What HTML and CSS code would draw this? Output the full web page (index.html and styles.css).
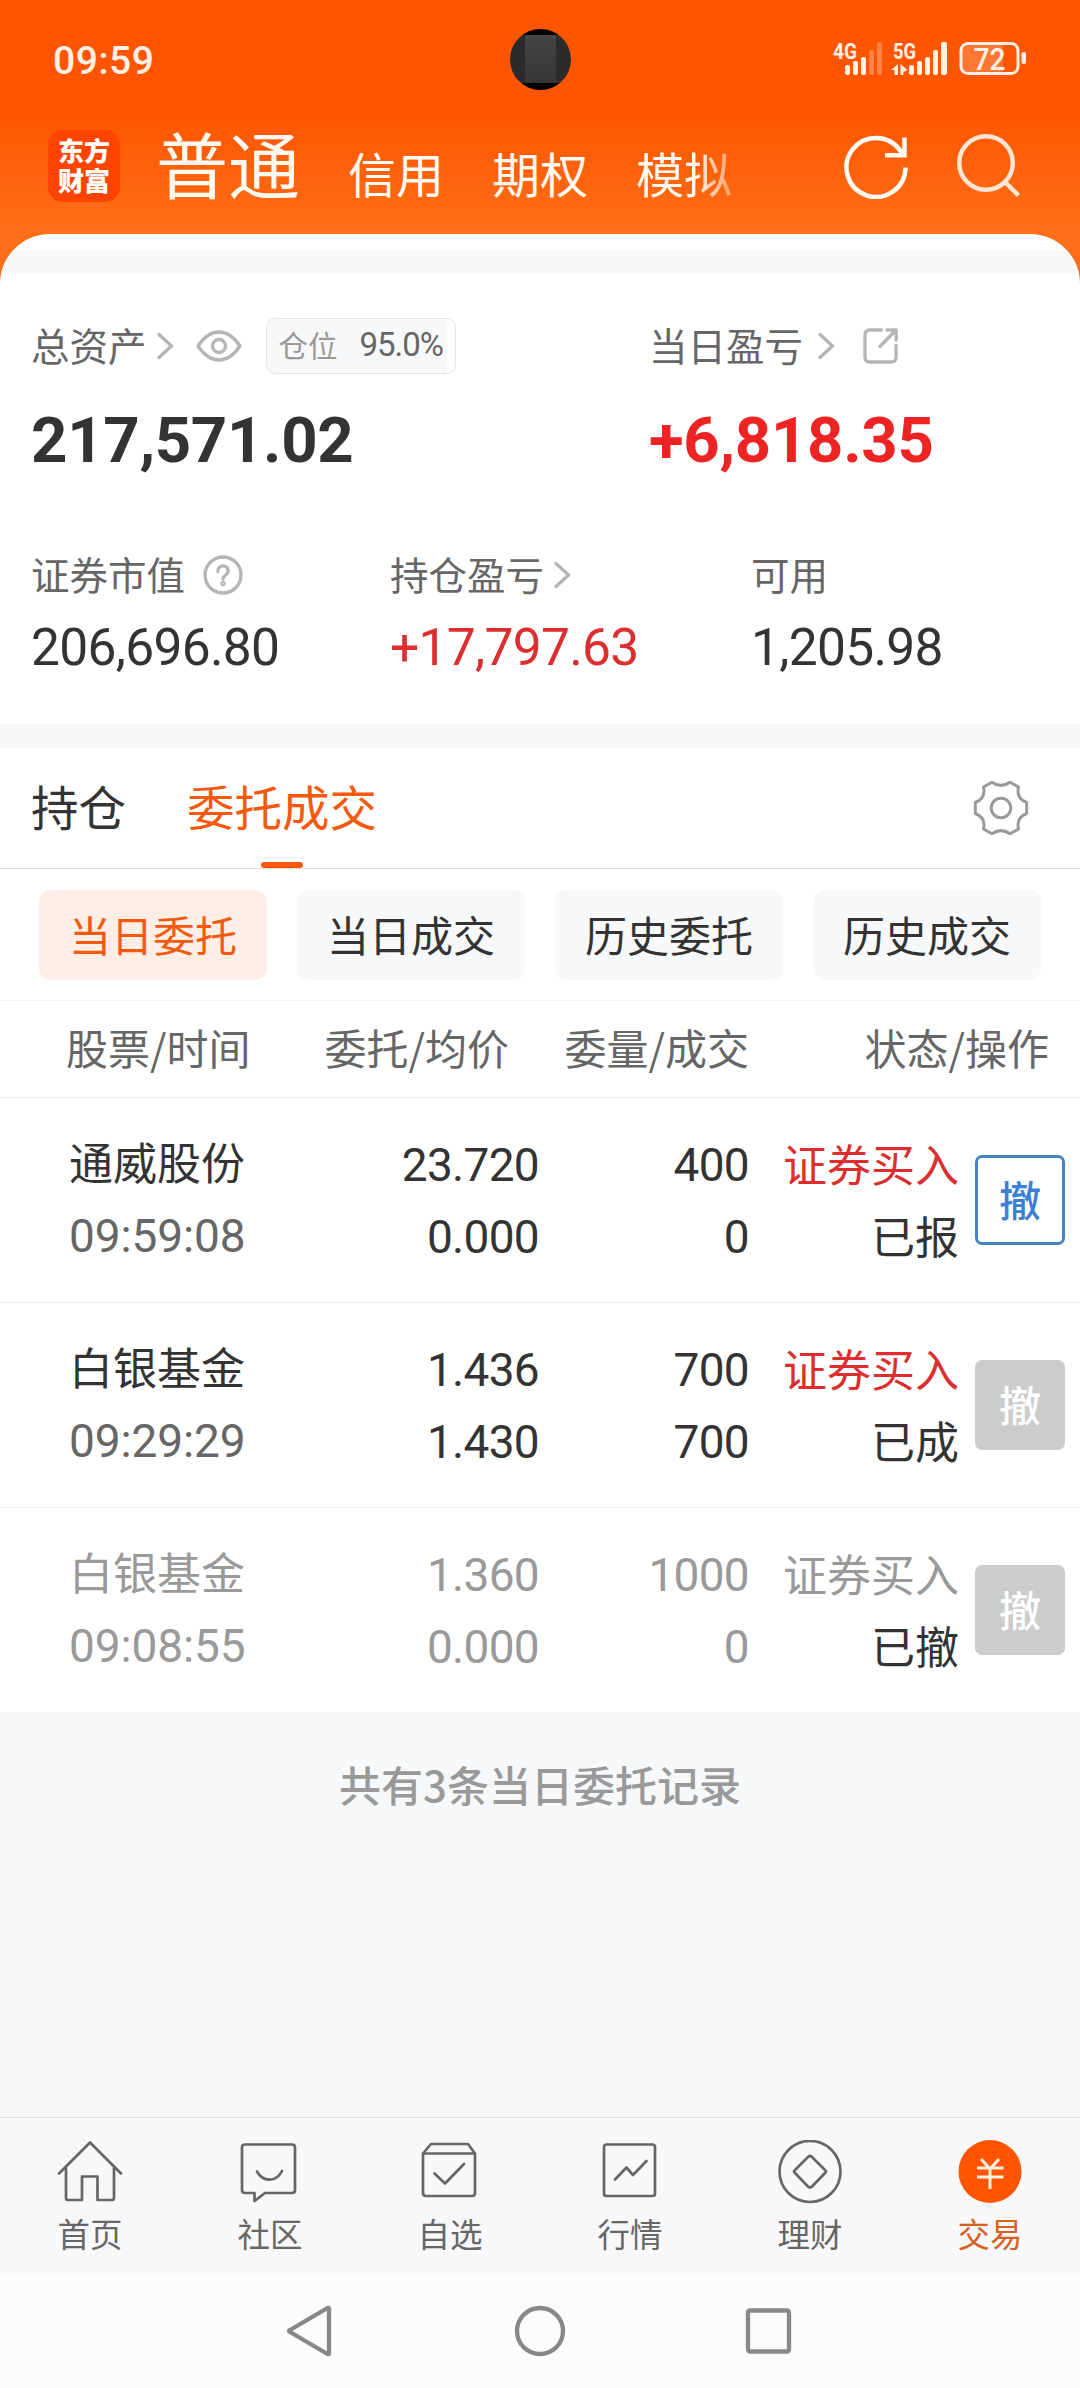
FILE: index.html
```html
<!DOCTYPE html>
<html lang="zh-CN">
<head>
  <meta charset="UTF-8" />
  <meta name="viewport" content="width=device-width, initial-scale=1" />
  <title>交易 - 委托成交</title>
  <link rel="stylesheet" href="styles.css">
</head>
<body>
  <header class="top">
    <div class="status-bar">
      <span class="clock">09:59</span>
      <div class="camera"><i></i></div>
      <svg class="signals" width="200" height="52" viewBox="-4 -8 200 52">
        <g fill="#fff0e6">
          <text class="net" x="-1" y="17.500" textLength="24" lengthAdjust="spacingAndGlyphs">4G</text>
          <rect x="11" y="24" width="5" height="10" rx="2" />
          <rect x="19" y="20" width="5" height="14" rx="2" />
          <rect x="27" y="16" width="5" height="18" rx="2" />
          <rect x="35" y="9" width="5" height="25" rx="2" opacity=".3" />
          <rect x="43" y="1" width="5" height="33" rx="2" opacity=".3" />
          <text class="net" x="59" y="17.500" textLength="23" lengthAdjust="spacingAndGlyphs">5G</text>
          <path d="M64 23v11h-3.500v-5h-3.500zM66.500 23l7 6-4 2v3h-3z" />
          <rect x="75" y="24" width="5" height="10" rx="2" />
          <rect x="83" y="20" width="5" height="14" rx="2" />
          <rect x="91" y="16" width="5" height="18" rx="2" />
          <rect x="99" y="9" width="5" height="25" rx="2" />
          <rect x="107" y="1" width="6" height="33" rx="2" />
          <path d="M128 7q0-4 4-4h37v28h-37q-4 0-4-4z" opacity=".22" />
          <rect x="127" y="2.500" width="57" height="30" rx="7" fill="none" stroke="#fff0e6" stroke-width="3" />
          <rect x="187.500" y="11" width="4.500" height="12" rx="2" />
          <text class="battery" x="139.500" y="28.500" textLength="32" lengthAdjust="spacingAndGlyphs">72</text>
        </g>
      </svg>
    </div>
    <div class="title-bar">
      <div class="logo"><span>东方</span><span>财富</span></div>
      <nav class="accounts">
        <a class="current">普通</a>
        <a>信用</a>
        <a>期权</a>
        <a class="faded">模拟</a>
      </nav>
      <svg class="refresh" width="66" height="66" viewBox="0 0 66 66" fill="none" stroke="#fffaf2" stroke-width="4.500">
        <path d="M62.500 34.500A29.500 29.500 0 1 1 57.500 18l3 3.500M61.500 4.500V22.200H42" />
      </svg>
      <svg class="search" width="66" height="66" viewBox="0 0 66 66" fill="none" stroke="#ffe6d4" stroke-width="4.500">
        <circle cx="31" cy="30" r="26.800" />
        <path d="M50 49l13.500 13.500" />
      </svg>
    </div>
  </header>

  <main>
    <section class="assets">
      <div class="strip"></div>
      <div class="main-row">
        <div class="total">
          <div class="label">
            总资产
            <svg class="chevron near" width="18" height="28" viewBox="0 0 18 28"><path d="M2 2.500l12.500 11.500L2 25.500" /></svg>
            <svg class="eye" width="46" height="34" viewBox="0 0 46 34">
              <path d="M2 17C8 8 15 3 23 3s15 5 21 14c-6 9-13 14-21 14S8 26 2 17z" />
              <circle cx="23" cy="17" r="6.500" />
            </svg>
            <span class="ratio">仓位<b>95.0%</b></span>
          </div>
          <div class="big">217,571.02</div>
        </div>
        <div class="today">
          <div class="label">
            当日盈亏
            <svg class="chevron far" width="18" height="28" viewBox="0 0 18 28"><path d="M2 2.500l12.500 11.500L2 25.500" /></svg>
            <svg class="share" width="36" height="36" viewBox="0 0 36 36">
              <path d="M18.500 2H7Q2 2 2 7v22q0 5 5 5h21q5 0 5-5V17.500M24 2h9.200v10M33 2L17 18.500" />
            </svg>
          </div>
          <div class="big up">+6,818.35</div>
        </div>
      </div>
      <div class="sub-row">
        <div>
          <div class="label">
            证券市值
            <svg class="help" width="40" height="40" viewBox="0 0 40 40">
              <circle cx="20" cy="20" r="18" />
              <path d="M14.800 16.500c0-7.500 10.400-7.500 10.400-.5 0 4-5.200 4.500-5.200 8" />
              <circle cx="20" cy="28.500" r="1" />
            </svg>
          </div>
          <div class="value">206,696.80</div>
        </div>
        <div>
          <div class="label">
            持仓盈亏
            <svg class="chevron near" width="18" height="28" viewBox="0 0 18 28"><path d="M2 2.500l12.500 11.500L2 25.500" /></svg>
          </div>
          <div class="value up">+17,797.63</div>
        </div>
        <div>
          <div class="label">可用</div>
          <div class="value">1,205.98</div>
        </div>
      </div>
    </section>

    <section class="orders">
      <div class="tabs">
        <a>持仓</a>
        <a class="active">委托成交</a>
        <svg class="gear" width="56" height="56" viewBox="0 0 56 56">
          <path d="M19 2.200Q28 8.500 37 2.200L45.500 7Q43 18.500 53.700 22.500V33.500Q43 37.500 45.500 49L37 53.800Q28 47.500 19 53.800L10.500 49Q13 37.500 2.300 33.500V22.500Q13 18.500 10.500 7z" />
          <circle cx="28" cy="28" r="9.800" />
        </svg>
      </div>
      <div class="chips">
        <button class="chip selected">当日委托</button>
        <button class="chip">当日成交</button>
        <button class="chip">历史委托</button>
        <button class="chip">历史成交</button>
      </div>
      <div class="list-head">
        <span>股票/时间</span>
        <span>委托/均价</span>
        <span>委量/成交</span>
        <span>状态/操作</span>
      </div>
      <div class="order">
        <div class="stock">通威股份<br><span class="num time">09:59:08</span></div>
        <div class="num">23.720<br>0.000</div>
        <div class="num">400<br>0</div>
        <div class="state"><span class="buy">证券买入</span><br>已报</div>
        <button class="cancel">撤</button>
      </div>
      <div class="order">
        <div class="stock">白银基金<br><span class="num time">09:29:29</span></div>
        <div class="num">1.436<br>1.430</div>
        <div class="num">700<br>700</div>
        <div class="state"><span class="buy">证券买入</span><br>已成</div>
        <button class="cancel" disabled>撤</button>
      </div>
      <div class="order cancelled">
        <div class="stock">白银基金<br><span class="num time">09:08:55</span></div>
        <div class="num">1.360<br>0.000</div>
        <div class="num">1000<br>0</div>
        <div class="state"><span class="buy">证券买入</span><br>已撤</div>
        <button class="cancel" disabled>撤</button>
      </div>
    </section>
    <p class="summary">共有3条当日委托记录</p>
  </main>

  <nav class="tab-bar">
    <a>
      <svg width="66" height="66" viewBox="0 0 66 66">
        <path d="M2 33.500L33 2.500l31 31M9 28v30q0 2 2 2h14V36.500h15.500V60H55q2 0 2-2V28" />
      </svg>
      首页
    </a>
    <a>
      <svg width="66" height="66" viewBox="0 0 66 66">
        <path d="M8 4.500h47q3 0 3 3V50q0 3-3 3H28l-10.500 8V53H8q-3 0-3-3V7.500q0-3 3-3z" />
        <path d="M20 31.500c6 11 19 11 25-.5" />
      </svg>
      社区
    </a>
    <a>
      <svg width="66" height="66" viewBox="0 0 66 66">
        <path d="M6 13.500h52V53q0 3-3 3H9q-3 0-3-3zL14 4h37l7 9.500" />
        <path d="M17.500 33.500L28 43.500l19-19.500" />
      </svg>
      自选
    </a>
    <a>
      <svg width="66" height="66" viewBox="0 0 66 66">
        <rect x="7" y="4.500" width="51" height="51.500" rx="2.500" />
        <path d="M18 39.500L29.500 27.500l6.500 7.500L49.500 21" />
      </svg>
      行情
    </a>
    <a>
      <svg width="66" height="66" viewBox="0 0 66 66">
        <circle cx="33" cy="31.500" r="30.500" />
        <path d="M31 17q2-2 4 0l13 13q2 1.500 0 3L35 46.500q-2 2-4 0L18 33q-2-1.500 0-3z" />
      </svg>
      理财
    </a>
    <a class="active">
      <svg width="66" height="66" viewBox="0 0 66 66">
        <circle class="coin" cx="33" cy="31.500" r="31.500" />
        <path class="yuan" d="M24 19l9 10 9-10M20 28h26.500M20 37h26.500M33 29v20" />
      </svg>
      交易
    </a>
  </nav>
  <div class="system-nav">
    <svg width="52" height="52" viewBox="0 0 52 52"><path d="M44 3.500v45q0 1-1.500.5L5 27q-2-1 0-2L42.500 3q1.500-.5 1.500.5z" /></svg>
    <svg width="52" height="52" viewBox="0 0 52 52"><circle cx="26" cy="26" r="23" /></svg>
    <svg width="52" height="52" viewBox="0 0 52 52"><rect x="5" y="5.500" width="41" height="41" rx="2" /></svg>
  </div>
</body>
</html>
```

FILE: styles.css
```css
* {
  margin: 0;
  padding: 0;
  box-sizing: border-box;
}
body {
  width: 1080px;
  height: 2388px;
  display: flex;
  flex-direction: column;
  background: #f7f8fa;
  color: #333;
  font-family: "Noto Sans CJK SC", sans-serif;
  overflow: hidden;
}
svg {
  flex-shrink: 0;
  fill: none;
  stroke-linecap: round;
  stroke-linejoin: round;
}
button {
  border: none;
  font-family: inherit;
  color: inherit;
}

/* header */
.top {
  height: 290px;
  flex-shrink: 0;
  margin-bottom: -56px;
  background: linear-gradient(#ff5500 0, #ff5500 112px, #ff6f19 234px);
}
.status-bar {
  height: 118px;
  display: grid;
  grid-template-columns: 1fr 61px 1fr;
  align-items: center;
  padding: 0 50px 0 53px;
}
.clock {
  font: 500 39px/60px Roboto, sans-serif;
  letter-spacing: 0.500px;
  color: #fff0e6;
  padding-top: 3px;
}
.camera {
  width: 61px;
  height: 61px;
  margin-left: -1px;
  border-radius: 50%;
  background: linear-gradient(#000 6px, #2b2b2b 6px, #2b2b2b 54px, #000 54px);
  padding: 6px 15px 7px;
}
.camera i {
  display: block;
  height: 48px;
  background: linear-gradient(#454545, #363636);
}
.signals {
  justify-self: end;
}
.signals .net {
  font: 700 22px Roboto, sans-serif;
}
.signals .battery {
  font: 500 31px Roboto, sans-serif;
}
.title-bar {
  display: flex;
  height: 116px;
  padding-left: 48px;
}
.logo {
  display: flex;
  flex-direction: column;
  gap: 4px;
  width: 72px;
  height: 72px;
  margin-top: 12px;
  padding-top: 7px;
  border-radius: 15px;
  background: #ff4400;
  color: #fff;
  font-size: 26px;
  font-weight: 900;
  line-height: 26px;
  text-align: center;
}
.accounts {
  display: flex;
  align-items: baseline;
  gap: 48px;
  width: 688px;
  padding-left: 36px;
  color: #fffaf2;
  font-size: 48px;
  line-height: 88px;
}
.accounts .current {
  font-size: 72px;
}
.accounts .faded {
  -webkit-mask-image: linear-gradient(90deg, #000 60%, rgba(0, 0, 0, 0.4));
  mask-image: linear-gradient(90deg, #000 60%, rgba(0, 0, 0, 0.4));
}
.refresh,
.search {
  stroke-linecap: butt;
  stroke-linejoin: miter;
}
.refresh {
  margin: 15px 0 0 35px;
}
.search {
  margin: 15px 0 0 46px;
}

/* assets */
main {
  flex: 1;
}
.assets {
  height: 490px;
  border-radius: 50px 50px 0 0;
  background: #fff;
  overflow: hidden;
}
.strip {
  height: 24px;
  margin-top: 16px;
  background: #f7f8fa;
}
.main-row {
  display: grid;
  grid-template-columns: 618px 1fr;
  padding: 45px 0 0 31px;
}
.sub-row {
  display: grid;
  grid-template-columns: 359px 361px 1fr;
  padding: 71px 0 0 31px;
}
.label {
  height: 54px;
  display: flex;
  align-items: center;
  padding-bottom: 5px;
  font-size: 38.500px;
  color: #666;
}
.label svg {
  margin-top: 4px;
  stroke: #b5b5b5;
  stroke-width: 3.300;
}
.chevron.near {
  margin-left: 10px;
}
.chevron.far {
  margin-left: 15px;
}
.eye {
  margin-left: 21px;
}
.share {
  margin-left: 27px;
}
.help {
  margin-left: 18px;
}
.ratio {
  display: flex;
  align-items: center;
  width: 190px;
  height: 56px;
  margin: 4px 0 0 24px;
  padding: 0 0 3px 12px;
  border: 1px solid #e6e6e8;
  border-radius: 9px;
  background: linear-gradient(90deg, #f7f8fa 180px, #fff 180px);
  font-size: 29.500px;
  color: #999;
}
.ratio b {
  margin-left: 22px;
  font: 400 33px Roboto, sans-serif;
  letter-spacing: -1px;
  color: #666;
}
.big {
  margin-top: 32px;
  height: 72px;
  font: 700 63.500px/72px Roboto, sans-serif;
  letter-spacing: -0.300px;
}
.value {
  margin-top: 16px;
  font: 400 51.500px/60px Roboto, sans-serif;
  letter-spacing: -0.700px;
}
.up,
.buy {
  color: #dc2e2e;
}
.big.up {
  color: #ee2424;
}

/* orders */
.orders {
  margin-top: 24px;
  background: #fff;
}
.tabs {
  height: 121px;
  display: flex;
  gap: 61px;
  padding: 0 50px 0 31px;
  border-bottom: 1px solid #ddd;
  font-size: 47.500px;
  line-height: 116px;
}
.tabs .active {
  display: flex;
  flex-direction: column;
  align-items: center;
  height: 120px;
  color: #f4590e;
}
.tabs .active::after {
  content: "";
  width: 42px;
  height: 6px;
  margin-top: -2px;
  border-radius: 3px;
  background: #f4590e;
}
.gear {
  margin: 32px 1px 0 auto;
  stroke: #999;
  stroke-width: 3;
}
.chips {
  height: 132px;
  display: flex;
  gap: 30px;
  padding: 21px 39px;
  border-bottom: 1px solid #f5f5f5;
}
.chip {
  width: 228px;
  height: 90px;
  padding-bottom: 4px;
  border-radius: 12px;
  background: #f7f8fa;
  font-size: 42px;
}
.chip.selected {
  background: #ffeee6;
  color: #f4590e;
}
.list-head {
  display: grid;
  grid-template-columns: 200px 243px 240px 300px;
  height: 97px;
  padding-left: 66px;
  border-bottom: 1px solid #eee;
  font-size: 42px;
  line-height: 92px;
  color: #666;
  text-align: right;
}
.list-head span:first-child {
  text-align: left;
}
.order {
  display: grid;
  grid-template-columns: 179px 290px 210px 210px 90px;
  align-items: center;
  height: 205px;
  padding-left: 70px;
  border-bottom: 1px solid #eee;
  font-size: 44px;
  line-height: 72px;
  text-align: right;
}
.order:last-child {
  height: 204px;
  border-bottom: none;
}
.stock,
.state {
  margin-top: -3px;
}
.stock {
  margin-left: -1px;
  text-align: left;
}
.num {
  margin-top: 1px;
  font-family: Roboto, sans-serif;
  font-size: 46px;
  letter-spacing: -0.700px;
}
.time {
  letter-spacing: -0.100px;
  color: #666;
}
.cancel {
  width: 90px;
  height: 90px;
  margin-left: 16px;
  padding-bottom: 4px;
  border: 3px solid #4782c8;
  border-radius: 7px;
  background: #fff;
  color: #3b80d5;
  font-size: 42px;
  font-weight: 500;
}
.cancel:disabled {
  border-color: #ccc;
  background: #ccc;
  color: #fff;
}
.cancelled,
.cancelled .time,
.cancelled .buy {
  color: #999;
}
.cancelled .state {
  color: #333;
}
.summary {
  padding-top: 42px;
  text-align: center;
  font-size: 42px;
  font-weight: 500;
  line-height: 60px;
  color: #999;
}

/* bottom */
.tab-bar {
  display: grid;
  grid-template-columns: repeat(6, 1fr);
  height: 157px;
  flex-shrink: 0;
  border-top: 1px solid #e2e2e2;
  background: #f8f8fa;
}
.tab-bar a {
  display: flex;
  flex-direction: column;
  align-items: center;
  padding-top: 22px;
  font-size: 32.500px;
  line-height: 53px;
  color: #666;
}
.tab-bar svg {
  stroke: #666;
  stroke-width: 2.700;
}
.tab-bar .active {
  color: #d6601f;
}
.tab-bar .coin {
  fill: #ff5500;
  stroke: none;
}
.tab-bar .yuan {
  stroke: #fff0e0;
  stroke-width: 3;
  stroke-linecap: butt;
}
.system-nav {
  display: flex;
  justify-content: center;
  align-items: center;
  gap: 177px;
  height: 114px;
  flex-shrink: 0;
  background: #fcfcfc;
}
.system-nav svg {
  stroke: #888;
  stroke-width: 4.300;
}
```
